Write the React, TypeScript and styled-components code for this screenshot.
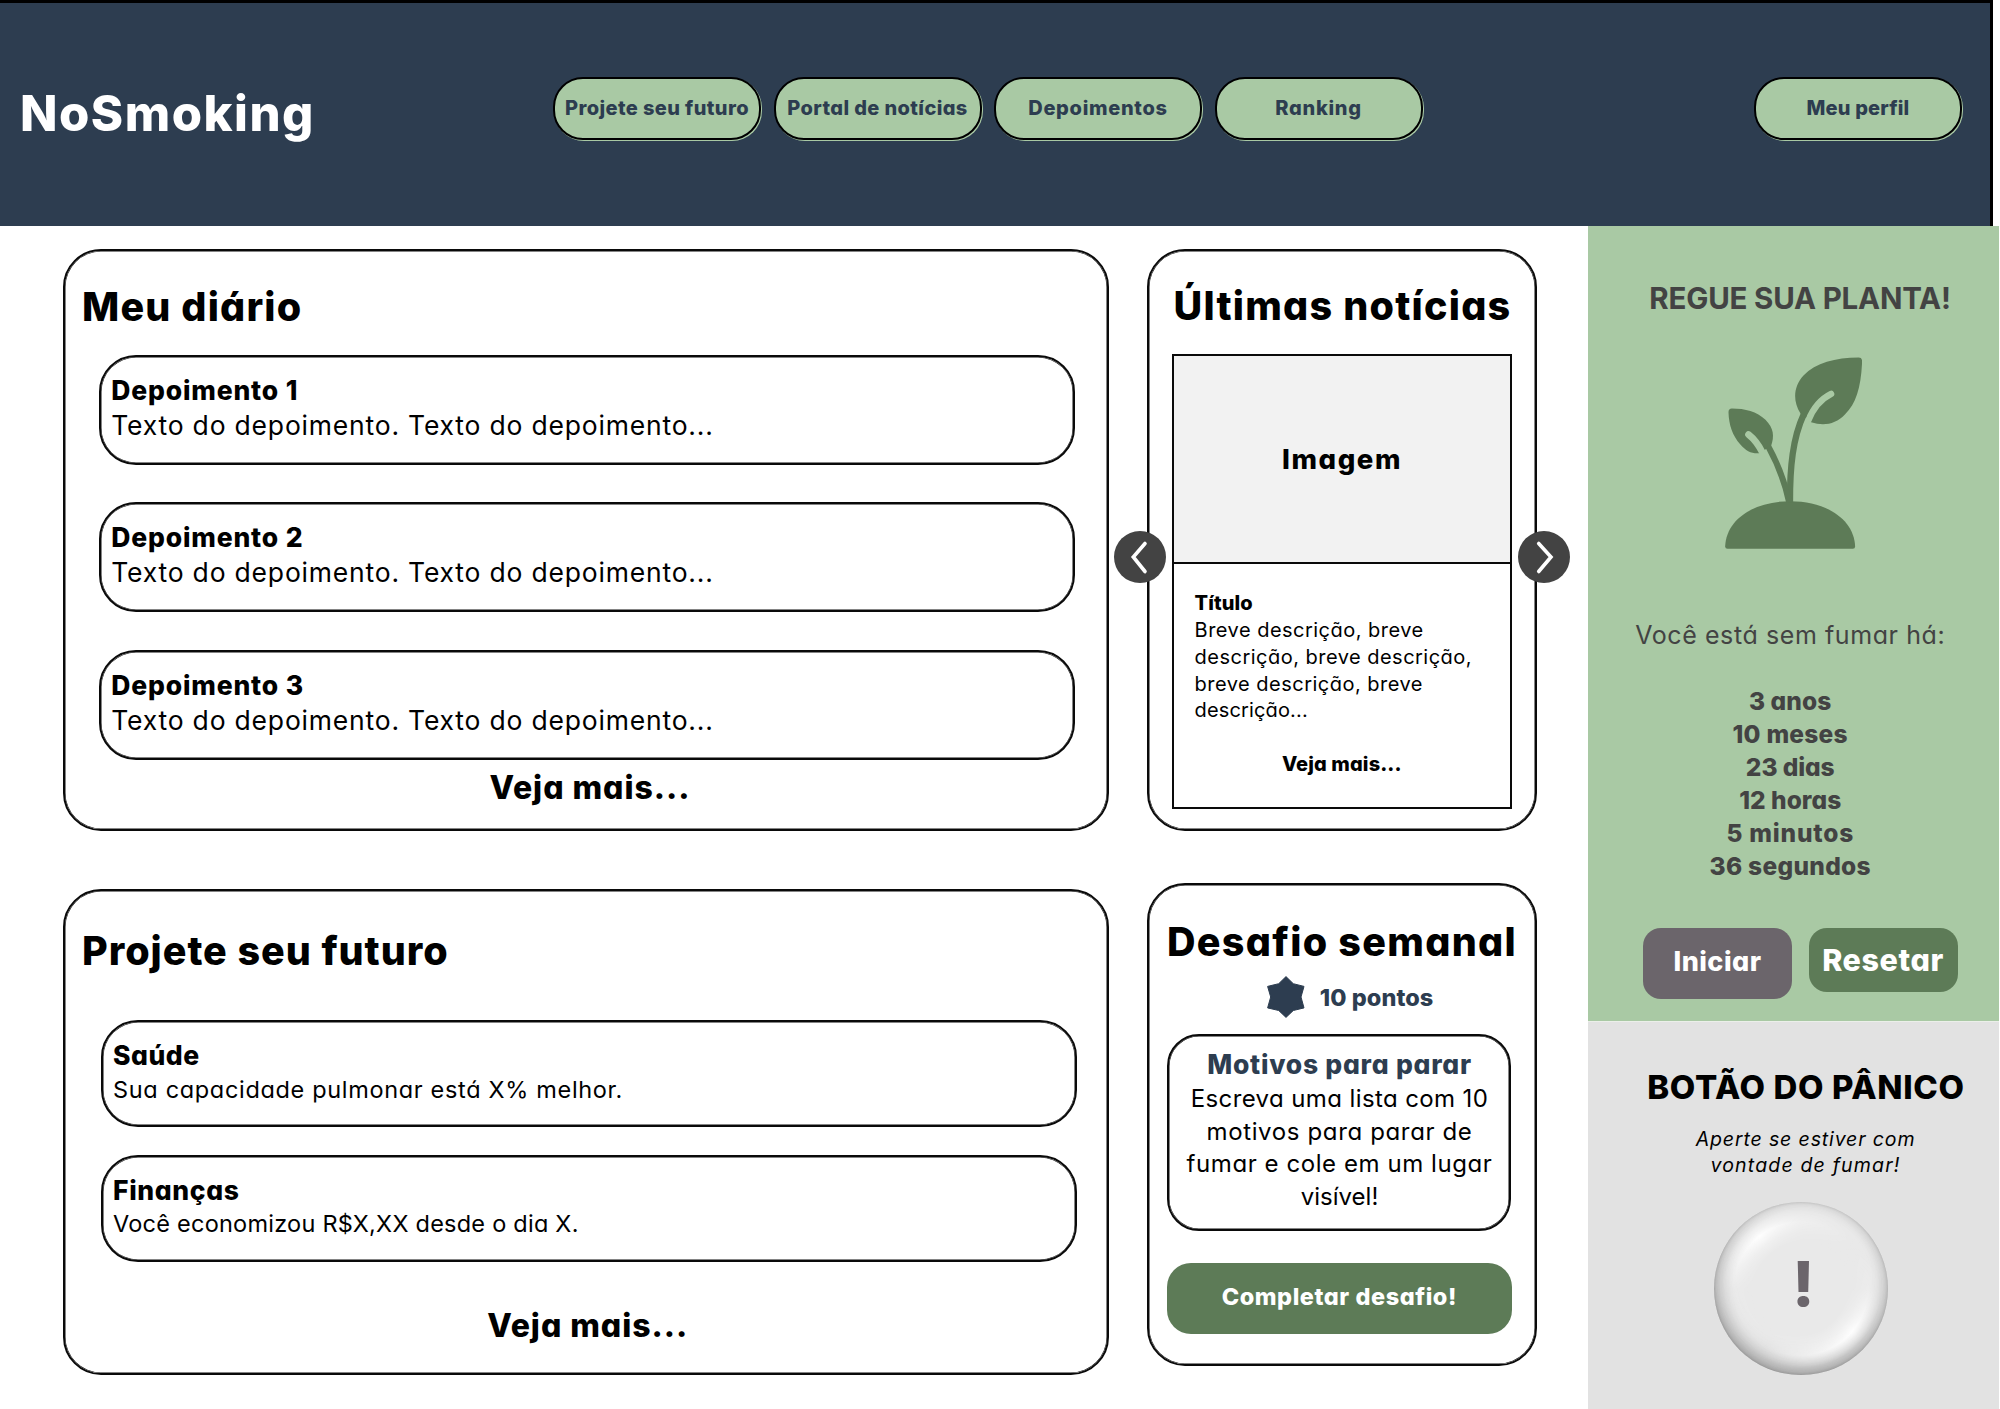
import React from 'react';
import styled, { createGlobalStyle } from 'styled-components';

const colors = {
  navy: '#2d3d50',
  sage: '#a9c9a4',
  moss: '#5d7b57',
  slate: '#6b656b',
  graphite: '#434343',
  mist: '#e2e2e2',
};

const GlobalStyle = createGlobalStyle`
  * { box-sizing: border-box; }
  body {
    margin: 0;
    background: #fff;
    color: #000;
    font-family: Inter, 'Open Sans', sans-serif;
    font-feature-settings: 'cv11';
  }
`;

const Page = styled.div`
  width: 2000px;
  height: 1409px;
  overflow: hidden;
`;

interface TextProps {
  $size: number;
  $line: number;
  $track?: number;
  $bold?: boolean;
  $top?: number;
}

const Text = styled.div<TextProps>`
  margin-top: ${(p) => p.$top ?? 0}px;
  font-size: ${(p) => p.$size}px;
  line-height: ${(p) => p.$line}px;
  font-weight: ${(p) => (p.$bold ? 800 : 400)};
  letter-spacing: ${(p) => p.$track ?? 0}px;
  white-space: nowrap;
`;

/* ---------- header ---------- */

const Header = styled.header`
  display: flex;
  align-items: flex-start;
  width: 1993px;
  height: 226px;
  padding: 74px 28px 0 20px;
  border-top: 3px solid #000;
  border-right: 3px solid #000;
  background: ${colors.navy};
`;

const Logo = styled(Text)`
  width: 533px;
  color: #fff;
`;

const Nav = styled.nav`
  display: flex;
  flex: 1;
  gap: 12.5px;
`;

const Pill = styled.button<{ $track: number; $end?: boolean }>`
  width: 208px;
  height: 63px;
  padding: 0 0 2px;
  margin-left: ${(p) => (p.$end ? 'auto' : '0')};
  border: 2px solid #000;
  border-radius: 30px;
  background: ${colors.sage};
  box-shadow: 1px 1px 0 ${colors.sage};
  color: ${colors.navy};
  font: 800 20px Inter, sans-serif;
  font-feature-settings: 'cv11';
  letter-spacing: ${(p) => p.$track}px;
  white-space: nowrap;
`;

/* ---------- body ---------- */

const Body = styled.div`
  display: flex;
  height: 1183px;
`;

const Main = styled.main`
  display: flex;
  gap: 38px;
  width: 1588px;
  padding: 22.5px 0 0 62.5px;
`;

const Column = styled.div<{ $width: number; $gap: number }>`
  display: flex;
  flex-direction: column;
  gap: ${(p) => p.$gap}px;
  width: ${(p) => p.$width}px;
`;

const Card = styled.section<{ $height: number; $pad: number }>`
  position: relative;
  height: ${(p) => p.$height}px;
  padding-top: ${(p) => p.$pad}px;
  border: 2px solid #0a0a0a;
  border-radius: 38px;
  box-shadow: inset 0 0 0 0.5px #0a0a0a;
`;

const LeftTitle = styled(Text)`
  padding-left: 17.5px;
`;

const CenterText = styled(Text)<{ $shift?: number }>`
  padding-left: ${(p) => p.$shift ?? 0}px;
  text-align: center;
`;

const List = styled.div<{ $top: number; $left: number; $gap: number }>`
  display: flex;
  flex-direction: column;
  gap: ${(p) => p.$gap}px;
  width: 976px;
  margin: ${(p) => p.$top}px 0 0 ${(p) => p.$left}px;
`;

const Entry = styled.article<{ $height: number; $pad: number }>`
  height: ${(p) => p.$height}px;
  padding: ${(p) => p.$pad}px 0 0 10px;
  border: 2px solid #0a0a0a;
  border-radius: 37px;
  box-shadow: inset 0 0 0 0.5px #0a0a0a;
`;

/* ---------- news ---------- */

const NewsBox = styled.div`
  width: 340px;
  height: 454.2px;
  margin: 28.2px auto 0;
  border: 2px solid #0a0a0a;
`;

const NewsImage = styled.div`
  display: flex;
  align-items: center;
  justify-content: center;
  height: 208px;
  border-bottom: 2px solid #0a0a0a;
  background: #f2f2f2;
`;

const NewsText = styled.div`
  padding: 25.7px 0 0 20.6px;
`;

const NewsLink = styled(CenterText)`
  margin-left: -21px;
`;

const Arrow = styled.button<{ $left: number }>`
  position: absolute;
  top: 280px;
  left: ${(p) => p.$left}px;
  width: 52px;
  height: 52px;
  padding: 0;
  border: 0;
  border-radius: 50%;
  background: ${colors.graphite};

  svg {
    display: block;
  }
`;

/* ---------- challenge ---------- */

const Points = styled.div`
  display: flex;
  gap: 15px;
  height: 42px;
  margin-top: 14.3px;
  padding-left: 117.8px;
  color: ${colors.navy};
`;

const Task = styled.div`
  width: 344px;
  height: 196.4px;
  margin: 16.4px 0 0 18px;
  padding: 12px 0 0 1px;
  border: 2px solid #0a0a0a;
  border-radius: 32px;
  box-shadow: inset 0 0 0 0.5px #0a0a0a;
`;

const TaskTitle = styled(CenterText)`
  color: ${colors.navy};
`;

const Complete = styled.button`
  display: block;
  width: 345.6px;
  height: 71px;
  margin: 32px 0 0 17.5px;
  padding: 0 0 3px;
  border: 0;
  border-radius: 24px;
  background: ${colors.moss};
  color: #fff;
  font: 800 23.5px Inter, sans-serif;
  font-feature-settings: 'cv11';
  letter-spacing: 0.55px;
`;

/* ---------- sidebar ---------- */

const Aside = styled.aside`
  width: 411px;
`;

const Garden = styled.section`
  height: 795px;
  padding-top: 57px;
  background: ${colors.sage};
  color: ${colors.graphite};
`;

const GardenTitle = styled(CenterText)`
  font-weight: 700;
`;

const Sprout = styled.svg`
  display: block;
  margin: 44.3px 0 0 137px;
`;

const Since = styled(CenterText)`
  padding-right: 6.6px;
`;

const Counter = styled.div`
  margin-top: 34.8px;
  padding-right: 6.6px;
`;

const Buttons = styled.div`
  display: flex;
  align-items: flex-start;
  gap: 16.5px;
  margin: 45px 0 0 55px;
`;

const Action = styled.button<{ $bg: string; $h: number; $size: number; $track: number; $lift: number }>`
  width: 149px;
  height: ${(p) => p.$h}px;
  padding: 0 0 ${(p) => p.$lift}px;
  border: 0;
  border-radius: 18px;
  background: ${(p) => p.$bg};
  color: #fff;
  font: 800 ${(p) => p.$size}px Inter, sans-serif;
  font-feature-settings: 'cv11';
  letter-spacing: ${(p) => p.$track}px;
`;

const Panic = styled.section`
  height: 388px;
  padding-top: 47.6px;
  border-top: 1px solid #ebefe9;
  background: ${colors.mist};
`;

const Hint = styled(CenterText)`
  font-style: italic;
`;

const PanicButton = styled.button`
  position: relative;
  display: block;
  width: 173.5px;
  height: 173.5px;
  margin: 23.4px 0 0 126px;
  padding: 0 0 11px 5px;
  border: 0;
  border-radius: 50%;
  background: #e9e9e9;
  box-shadow:
    inset 0 0 3px rgba(0, 0, 0, 0.14),
    inset 3px -14px 22px -4px rgba(0, 0, 0, 0.22),
    inset 10px -4px 16px -6px rgba(0, 0, 0, 0.12),
    inset -5px -3px 14px -2px rgba(0, 0, 0, 0.12),
    inset 0 4px 12px rgba(0, 0, 0, 0.05);
  color: ${colors.slate};
  font: 800 62px Inter, sans-serif;

  &::before {
    content: '';
    position: absolute;
    inset: 0;
    border-radius: 50%;
    background: conic-gradient(
      rgba(255, 255, 255, 0.3) 0deg,
      rgba(255, 255, 255, 0) 50deg,
      rgba(255, 255, 255, 0.15) 90deg,
      rgba(255, 255, 255, 0.95) 130deg,
      rgba(255, 255, 255, 0.6) 165deg,
      rgba(255, 255, 255, 0.15) 210deg,
      rgba(255, 255, 255, 0.1) 270deg,
      rgba(255, 255, 255, 0.95) 321deg,
      rgba(255, 255, 255, 0.3) 360deg
    );
    mask-image: radial-gradient(
      closest-side,
      transparent 52%,
      rgba(0, 0, 0, 0.35) 64%,
      #000 77%,
      rgba(0, 0, 0, 0.45) 84%,
      transparent 92%
    );
  }
`;

const Star = () => (
  <svg width="38" height="42" viewBox="0 0 38 42">
    <path
      d="M19 .6 26.3 7.7 37 10.4 34 21l3 10.9-10.7 2.6L19 41.4l-7.3-6.9L.6 31.9 3.7 21 .6 10.4l11.1-2.7Z"
      fill={colors.navy}
      stroke={colors.navy}
      strokeWidth="1"
      strokeLinejoin="round"
    />
  </svg>
);

const Chevron = ({ points }: { points: string }) => (
  <svg width="52" height="52" viewBox="0 0 52 52">
    <polyline points={points} fill="none" stroke="#fff" strokeWidth="3.6" strokeLinecap="round" />
  </svg>
);

const Plant = () => (
  <Sprout width="137.3" height="192" viewBox="434.5 111.5 412 576" fill="none">
    <g fill={colors.moss}>
      <path d="M661 281C637 243 640 200 670 167C707 128 765 114 836 113Q846 113 846 124C843 200 828 252 795 283C766 314 730 319 693 307Z" />
      <path d="M573 378C583 350 581 325 556 300C530 275 495 266 455 266Q445 266 445 277C446 315 457 347 480 373C498 394 515 402 538 400Z" />
      <path d="M435 680C438 600 520 544 630 544C740 544 822 600 825 680Q825 687 818 687H442Q435 687 435 680Z" />
    </g>
    <g stroke={colors.sage} strokeLinecap="round">
      <path d="M753 222C721 238 700 262 684 303" strokeWidth="19" />
      <path d="M505 344C523 358 536 376 548 400" strokeWidth="20" />
    </g>
    <g stroke={colors.moss}>
      <path d="M629.5 548C629 440 638 355 671 283" strokeWidth="19" />
      <path d="M627 548C615 490 592 430 564.5 380" strokeWidth="18" />
    </g>
  </Sprout>
);

const links = [
  { label: 'Projete seu futuro', track: 0.4 },
  { label: 'Portal de notícias', track: 0.38 },
  { label: 'Depoimentos', track: 0.7 },
  { label: 'Ranking', track: 0.71 },
];

const elapsed = [
  { label: '3 anos', track: 0.1 },
  { label: '10 meses', track: 0.24 },
  { label: '23 dias', track: -0.09 },
  { label: '12 horas', track: 0.03 },
  { label: '5 minutos', track: 0.79 },
  { label: '36 segundos', track: 0.3 },
];

const taskLines = [
  { label: 'Escreva uma lista com 10', track: 0.39 },
  { label: 'motivos para parar de', track: 0.64 },
  { label: 'fumar e cole em um lugar', track: 0.57 },
  { label: 'visível!', track: 0.01 },
];

export default function App() {
  return (
    <Page>
      <GlobalStyle />
      <Header>
        <Logo $bold $size={49} $line={50} $track={1.5} $top={12}>NoSmoking</Logo>
        <Nav>
          {links.map((l) => (
            <Pill key={l.label} $track={l.track}>{l.label}</Pill>
          ))}
          <Pill $track={0.15} $end>Meu perfil</Pill>
        </Nav>
      </Header>

      <Body>
        <Main>
          <Column $width={1046.5} $gap={58.2}>
            <Card $height={582.4} $pad={36.5}>
              <LeftTitle $bold $size={39.5} $line={40} $track={1.16}>Meu diário</LeftTitle>
              <List $top={27.7} $left={34.7} $gap={37.5}>
                {[1, 2, 3].map((n) => (
                  <Entry key={n} $height={110} $pad={16}>
                    <Text $bold $size={26.5} $line={35.2} $track={0.84}>Depoimento {n}</Text>
                    <Text $size={26.5} $line={35.2} $track={0.8}>
                      Texto do depoimento. Texto do depoimento...
                    </Text>
                  </Entry>
                ))}
              </List>
              <CenterText $bold $size={32} $line={40} $track={0.97} $top={8} $shift={8.5}>
                Veja mais...
              </CenterText>
            </Card>

            <Card $height={485.7} $pad={40.3}>
              <LeftTitle $bold $size={39.5} $line={40} $track={0.97}>Projete seu futuro</LeftTitle>
              <List $top={49} $left={36.5} $gap={27.5}>
                <Entry $height={107} $pad={16.7}>
                  <Text $bold $size={26.5} $line={33} $track={0.52}>Saúde</Text>
                  <Text $size={23.5} $line={33} $track={0.67} $top={0.8}>
                    Sua capacidade pulmonar está X% melhor.
                  </Text>
                </Entry>
                <Entry $height={107} $pad={16.7}>
                  <Text $bold $size={26.5} $line={33} $track={0.65}>Finanças</Text>
                  <Text $size={23.5} $line={33} $track={0.24} $top={0.8}>
                    Você economizou R$X,XX desde o dia X.
                  </Text>
                </Entry>
              </List>
              <CenterText $bold $size={32} $line={40} $track={0.97} $top={44.2} $shift={4}>
                Veja mais...
              </CenterText>
            </Card>
          </Column>

          <Column $width={390} $gap={52}>
            <Card $height={582.3} $pad={35.8}>
              <CenterText $bold $size={39.5} $line={40} $track={1.23} $shift={1}>Últimas notícias</CenterText>
              <NewsBox>
                <NewsImage>
                  <Text $bold $size={27.5} $line={34} $track={1.6}>Imagem</Text>
                </NewsImage>
                <NewsText>
                  <Text $bold $size={20} $line={26.8} $track={0.1}>Título</Text>
                  <Text $size={20} $line={26.8} $track={0.48}>Breve descrição, breve</Text>
                  <Text $size={20} $line={26.8} $track={0.48}>descrição, breve descrição,</Text>
                  <Text $size={20} $line={26.8} $track={0.48}>breve descrição, breve</Text>
                  <Text $size={20} $line={26.8} $track={0.14}>descrição...</Text>
                  <NewsLink $bold $size={20} $line={26.8} $track={0.11} $top={26.9}>Veja mais...</NewsLink>
                </NewsText>
              </NewsBox>
              <Arrow $left={-34.8} aria-label="Anterior">
                <Chevron points="31,12.5 19.3,26 31,40.5" />
              </Arrow>
              <Arrow $left={369} aria-label="Próxima">
                <Chevron points="20.7,12.5 33,26 20.7,40.5" />
              </Arrow>
            </Card>

            <Card $height={483.4} $pad={37}>
              <CenterText $bold $size={39.5} $line={40} $track={1.29}>Desafio semanal</CenterText>
              <Points>
                <Star />
                <Text $bold $size={23.5} $line={42} $track={0.06} $top={0.8}>10 pontos</Text>
              </Points>
              <Task>
                <TaskTitle $bold $size={26.5} $line={32.7} $track={0.73}>Motivos para parar</TaskTitle>
                {taskLines.map((l, i) => (
                  <CenterText key={l.label} $size={24} $line={32.7} $track={l.track} $top={i ? 0 : 1.8}>
                    {l.label}
                  </CenterText>
                ))}
              </Task>
              <Complete>Completar desafio!</Complete>
            </Card>
          </Column>
        </Main>

        <Aside>
          <Garden>
            <GardenTitle $size={29.5} $line={30} $track={-0.19} $shift={13}>REGUE SUA PLANTA!</GardenTitle>
            <Plant />
            <Since $size={25} $line={30} $track={0.59} $top={71}>Você está sem fumar há:</Since>
            <Counter>
              {elapsed.map((e) => (
                <CenterText key={e.label} $bold $size={24.5} $line={33} $track={e.track}>{e.label}</CenterText>
              ))}
            </Counter>
            <Buttons>
              <Action $bg={colors.slate} $h={71.3} $size={27} $track={0.47} $lift={5}>Iniciar</Action>
              <Action $bg={colors.moss} $h={63.6} $size={30.5} $track={0.59} $lift={0}>Resetar</Action>
            </Buttons>
          </Garden>
          <Panic>
            <CenterText $bold $size={33} $line={34} $track={0.65} $shift={25}>BOTÃO DO PÂNICO</CenterText>
            <Hint $size={19.5} $line={26} $track={0.87} $top={22.9} $shift={24}>Aperte se estiver com</Hint>
            <Hint $size={19.5} $line={26} $track={1.17} $shift={24}>vontade de fumar!</Hint>
            <PanicButton>!</PanicButton>
          </Panic>
        </Aside>
      </Body>
    </Page>
  );
}
